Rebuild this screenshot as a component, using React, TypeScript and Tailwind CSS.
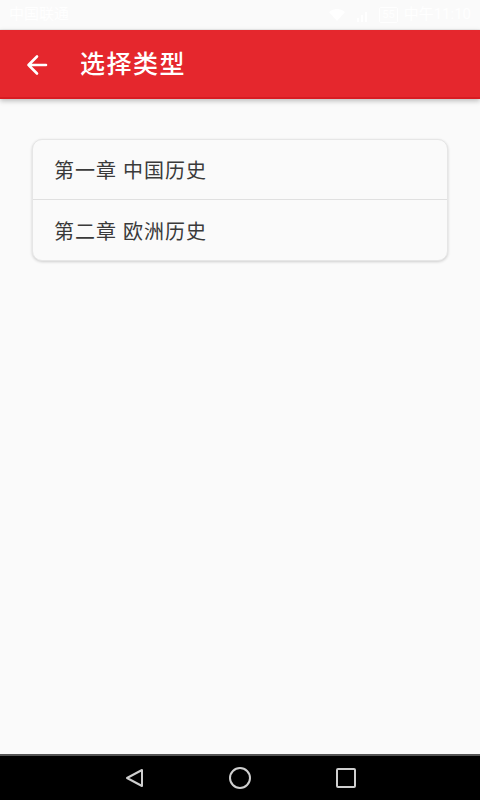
export default function App() {
  const font = { fontFamily: '"Roboto", "Noto Sans CJK SC", sans-serif' };
  return (
    <div className="w-[480px] h-[800px] flex flex-col bg-[#fafafa] overflow-hidden" style={font}>
      {/* status bar */}
      <div className="h-[30px] flex items-center justify-between px-[9px] text-[15px] text-white border-b border-[#eeeeee]">
        <span>中国联通</span>
        <div className="flex items-center gap-[6px]">
          <svg width="16" height="12" viewBox="0 0 16 12" fill="white">
            <path d="M8 12 0 3a12 12 0 0 1 16 0z" />
          </svg>
          <svg width="22" height="14" viewBox="0 0 22 14" fill="white">
            <rect x="6" y="10" width="2" height="4" />
            <rect x="10" y="7" width="2" height="7" />
            <rect x="14" y="4" width="2" height="10" />
          </svg>
          <span className="border border-white rounded-[2px] px-[2px] text-[11px] leading-[14px]">55</span>
          <span>中午11:10</span>
        </div>
      </div>

      {/* app bar */}
      <div className="h-[69px] bg-[#e5272d] border-b-2 border-[#d81c22] flex items-center pt-[3px] shadow-[0_2px_5px_rgba(0,0,0,0.25)] relative z-10">
        <svg className="ml-[25px]" width="24" height="24" viewBox="0 0 24 24" fill="none" stroke="white" strokeWidth="2.6" strokeLinecap="round" strokeLinejoin="round">
          <path d="M21 12H3.5M12 3.5 3.5 12l8.5 8.5" />
        </svg>
        <span className="ml-[31px] text-white text-[25px] font-medium tracking-[1.5px]">选择类型</span>
      </div>

      {/* content */}
      <div className="flex-1 px-[32px] pt-[40px]">
        <div className="bg-[#fafafa] rounded-[10px] border border-[#e6e6e6] shadow-[0_1px_3px_rgba(0,0,0,0.18)]">
          <div className="h-[60px] flex items-center pl-[21px] pt-[3px] text-[20px] tracking-[1px] text-[#3a3a3a] border-b border-[#e0e0e0]">第一章 中国历史</div>
          <div className="h-[60px] flex items-center pl-[21px] pt-[3px] text-[20px] tracking-[1px] text-[#3a3a3a]">第二章 欧洲历史</div>
        </div>
      </div>

      {/* nav bar */}
      <div className="h-[46px] bg-black border-t-2 border-[#555555] flex items-center justify-center">
        <div className="w-[106px] flex justify-center">
          <svg width="22" height="22" viewBox="0 0 22 22" fill="none" stroke="#cfcfcf" strokeWidth="2" strokeLinejoin="round">
            <path d="M19 3v16L4 11z" />
          </svg>
        </div>
        <div className="w-[106px] flex justify-center">
          <svg width="24" height="24" viewBox="0 0 24 24" fill="none" stroke="#cfcfcf" strokeWidth="2">
            <circle cx="12" cy="12" r="10" />
          </svg>
        </div>
        <div className="w-[106px] flex justify-center">
          <svg width="22" height="22" viewBox="0 0 22 22" fill="none" stroke="#cfcfcf" strokeWidth="2">
            <rect x="2" y="2" width="18" height="18" rx="1" />
          </svg>
        </div>
      </div>
    </div>
  );
}
